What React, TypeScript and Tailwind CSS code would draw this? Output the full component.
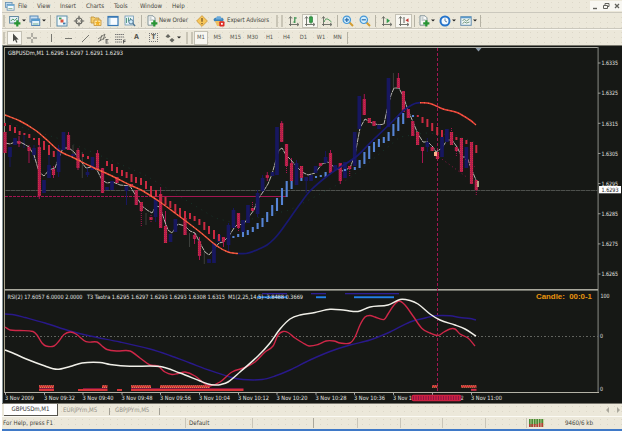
import React from "react";

const FONT = "font-['DejaVu_Sans_Condensed','DejaVu_Sans','Noto_Sans',sans-serif]";

type Bar = [number, number, number];

const redBodies: Bar[] = [
  [5, 132, 153], [19, 141, 144], [29, 147, 151], [39.3, 147, 196], [53.5, 169, 175], [68.5, 135, 150],
  [78, 150, 168], [97.5, 153, 170], [102.5, 168, 193], [117, 177, 183], [131.5, 184, 187], [136.3, 190, 205],
  [141.3, 202, 211], [151, 217, 220], [160.6, 194, 228], [165.5, 226, 243], [185, 218, 235], [194.5, 235, 239],
  [199.5, 241, 256], [223.5, 237, 242], [238.5, 213, 228], [252.5, 208, 211], [267.3, 175, 178], [281.7, 123, 142],
  [286.5, 144, 166], [291.5, 163, 181], [301.5, 166, 178], [320.5, 163, 166], [330.5, 153, 173], [340.3, 163, 181],
  [349.7, 166, 169], [364.3, 99, 115], [369.3, 118, 123], [374, 121, 126], [398.4, 78, 88], [403.4, 91, 112],
  [408.3, 109, 118], [412.7, 121, 136], [417.6, 132, 145], [422.5, 147, 151], [432.2, 147, 151], [437.4, 152, 159],
  [451.5, 132, 145], [456.4, 147, 151], [461.4, 138, 172], [471.5, 142, 184], [476.3, 180, 190],
];
const redWicks: Bar[] = [
  [19, 136, 147], [29, 145, 163], [39.3, 140, 199], [53.5, 166, 178], [68.5, 132, 136], [78, 148, 170],
  [97.5, 150, 153], [165.5, 211, 226], [194.5, 233, 244], [199.5, 237, 260], [223.5, 242, 247],
  [160.6, 187, 194], [267.3, 172, 181], [281.7, 121, 125], [291.5, 158, 163], [330.5, 150, 154], [340.3, 181, 184],
  [364.3, 94, 100], [398.4, 73, 78], [422.5, 151, 163],
];
const redDots: Bar[] = [
  [141.3, 211, 227], [238.5, 228, 232], [252.5, 202, 208], [286.5, 166, 174], [349.7, 169, 177], [451.5, 128, 132],
  [151, 215, 223], [456.4, 151, 156], [476.3, 190, 196],
];
const blueBodies: Bar[] = [
  [10, 147, 157], [15, 138, 145], [34, 148, 155], [44, 180, 193], [49, 165, 178], [58.6, 148, 172], [63.5, 132, 150],
  [73, 154, 156], [87.5, 172, 175], [92.5, 157, 170], [107, 187, 190], [112, 181, 190], [126.5, 186, 191],
  [155.6, 199, 217], [170.5, 234, 242], [175.4, 219, 232], [209, 259, 263], [214, 243, 263], [219, 235, 242],
  [228.5, 225, 245], [233.5, 210, 228], [243, 220, 232], [248, 205, 223], [257.6, 193, 214], [262.6, 178, 191],
  [272.5, 172, 176], [277, 127, 175], [296.5, 163, 185], [306.2, 177, 181], [311, 175, 181], [315.6, 166, 173],
  [325.6, 157, 163], [335.3, 165, 170], [345, 162, 178], [354.7, 132, 166], [359.3, 96, 129], [379, 125, 129],
  [388.5, 78, 127], [427.3, 142, 147], [442, 137, 157], [446.9, 129, 142], [466.4, 147, 168],
];
const blueWicks: Bar[] = [
  [10, 157, 167], [24, 133, 148], [34, 145, 160], [49, 153, 165], [58.6, 145, 177], [87.5, 168, 177], [126.5, 185, 205],
  [155.6, 217, 222], [228.5, 223, 252], [233.5, 208, 210], [257.6, 190, 217], [262.6, 175, 193], [296.5, 160, 166],
  [306.2, 180, 193], [325.6, 151, 157], [427.3, 138, 152],
];
const greyWicks: Bar[] = [
  [73, 145, 154], [82.3, 152, 178], [146, 213, 225], [189.5, 233, 247], [204.3, 252, 264], [393.4, 73, 88],
];
const redTrend: Bar[] = [
  [5, 123, 126], [10, 125, 131], [15, 127, 133], [19.6, 131, 135], [24.4, 133, 135], [29.3, 134, 138], [34, 138, 140],
  [39, 138, 145], [44, 141, 150], [49, 145, 155], [53.8, 151, 157], [83, 154, 157], [88, 156, 159], [107, 161, 166],
  [112, 164, 171], [117, 167, 173], [122, 170, 176], [126.6, 172, 178], [131.5, 174, 182], [136, 177, 183],
  [141, 178, 185], [146, 181, 189], [151, 186, 196], [156, 190, 197], [160.6, 194, 203], [165.5, 197, 205],
  [170.3, 201, 208], [175.3, 204, 213], [180, 208, 217], [185, 211, 218], [190, 213, 219], [194.6, 216, 221],
  [199.4, 219, 225], [204.3, 222, 230], [209, 226, 234], [214, 230, 239], [219, 234, 241], [417.8, 115, 117],
  [422.5, 117, 123], [427.4, 119, 127], [432.2, 123, 131], [437.2, 127, 135], [442, 130, 137], [456.4, 137, 140],
  [466.4, 140, 144], [476.3, 145, 153],
];
const blueTrend: Bar[] = [
  [233.4, 236, 238], [238.2, 234, 237], [243, 232, 237], [247.8, 230, 235], [252.8, 227, 232], [257.6, 223, 229],
  [262.5, 218, 227], [267.2, 212, 222], [272.2, 205, 216], [277, 198, 211], [282, 188, 205], [286.7, 181, 197],
  [291.6, 181, 189], [301.4, 178, 181], [316, 176, 178], [320.8, 175, 177], [325.6, 172, 177], [345, 169, 171],
  [354.8, 167, 170], [359.6, 160, 168], [364.4, 152, 164], [369.2, 146, 159], [374, 142, 152], [378.9, 139, 147],
  [383.8, 137, 143], [388.6, 132, 141], [393.4, 124, 136], [398.3, 117, 131], [403.2, 113, 124], [413, 115, 117],
];

const bars = (list: Bar[], w: number, fill: string) =>
  list.map(([x, a, b], i) => <rect key={i} x={x - w / 2} y={a} width={w} height={b - a} fill={fill} />);
const dots = (list: Bar[], stroke: string) =>
  list.map(([x, a, b], i) => (
    <line key={i} x1={x} x2={x} y1={a} y2={b} stroke={stroke} strokeWidth={1} strokeDasharray="1 1" />
  ));

/* Monotone-ish curve through the given points. */
function curve(points: string) {
  const p = points.split(" ").map((s) => s.split(",").map(Number));
  let d = `M${p[0][0]} ${p[0][1]}`;
  for (let i = 0; i < p.length - 1; i++) {
    const a = p[Math.max(0, i - 1)], b = p[i], c = p[i + 1], e = p[Math.min(p.length - 1, i + 2)];
    const dx = (c[0] - b[0]) / 3;
    const m1 = c[0] === a[0] ? 0 : (c[1] - a[1]) / (c[0] - a[0]);
    const m2 = e[0] === b[0] ? 0 : (e[1] - b[1]) / (e[0] - b[0]);
    d += `C${b[0] + dx} ${b[1] + m1 * dx} ${c[0] - dx} ${c[1] - m2 * dx} ${c[0]} ${c[1]}`;
  }
  return d;
}

const quoteLine =
  "5,143 10,144 15,142 20,142 24,144 29,147 34,155 39,172 44,176 49,170 55,168 58,160 63,148 69,148 74,152 80,160 86,168 92,167 97,170 102,180 107,183 113,182 120,185 130,186 136,196 142,206 147,210 152,213 156,206 160,207 165,222 168,230 172,233 178,224 185,226 190,231 195,233 200,243 205,252 209,255 214,249 219,243 223,242 229,236 234,228 238,224 243,225 248,218 254,210 258,199 263,192 268,184 272,174 276,160 279,150 282,148 286,155 291,160 296,166 302,172 308,175 315,173 322,164 328,162 334,167 342,171 350,168 355,155 360,128 365,119 372,123 379,125 384,124 387,110 391,95 394,88 399,88 403,96 408,110 413,122 418,134 423,142 428,142 433,147 436,152 442,148 447,140 452,140 457,147 462,157 467,157 471,168 476,180";
const maDown =
  "5,115 20,121 35,130 47,140 58,150 65,154 72,157 90,166 110,175 130,185 143,191 160,202 175,213 200,232 217,246 228,252 238,253.5";
const maUp =
  "238,253.5 246,253.5 253,251.5 260,248.5 267,245 274,239 280,232 300,204 310,191 330,174 357,156 373,140 393,121 403,111 410,106 415,103.5 420,102.7";
const maEnd = "420,102.7 430,103.5 443,109 457,112.5 470,120 476,125";
const slowLine =
  "5,314 15,315 25,317.5 45,323 70,331 90,336 120,342 150,349 170,355.5 190,363 210,370.5 230,377 243,379.5 262,379.5 275,376 290,370 310,360 330,351.5 350,345 370,340 390,332 410,322 425,318 435,315.8 450,315.8 460,317.5 470,318.5 476,320";
const fastLine =
  "5,327 10,330 20,330.5 33,331.5 37,335 42,343 46,346 54,346 59,341 64,334.5 70,332 76,334 86,341.7 97,342 102,346 107,349.5 117,351 130,351 140,358 150,365 158,366 165,372 172,374.5 178,373.5 185,372 195,376 205,384 210,386 220,382 232,372 245,367.5 255,362 265,352 273,346 278,335 283,331.5 288,332.5 295,338 303,343 309,346 318,344.5 326,341 334,341 340,343 350,343 355,337 360,325 365,317 370,315.5 375,317 384,319.5 388,314 394,305 399,301 405,305 413,316 422,328.5 430,333 438,335.5 444,332 450,329 455,329 460,334 468,338 475,346";
const signalLine =
  "5,350 15,354 25,358.5 45,366 57,369.3 70,366.5 82,363 100,362.5 110,364.5 130,366.3 160,366.5 180,373 200,381 208,384 215,385 221,384.5 228,382 240,372 258,356 270,343 280,329 290,319 300,315 315,312.5 330,309.3 345,310.3 358,311.5 370,307 388,305 400,299.5 410,300.5 418,304 430,314 440,320 455,325 465,329 476,336";

const strip = (list: [number, number][], y: number, h: number, fill: string) =>
  list.map(([a, b], i) => <rect key={i} x={a} y={y} width={b - a} height={h} fill={fill} />);

const prices = ["1.6335", "1.6325", "1.6315", "1.6305", "1.6295", "1.6285", "1.6275", "1.6265"];
const times: [number, string, number][] = [
  [5, "3 Nov 2009", 29], [44, "3 Nov 09:32", 31], [82.5, "3 Nov 09:40", 31], [121.5, "3 Nov 09:48", 31],
  [160, "3 Nov 09:56", 31], [199, "3 Nov 10:04", 31], [238, "3 Nov 10:12", 31], [276.5, "3 Nov 10:20", 31],
  [315.5, "3 Nov 10:28", 31], [354, "3 Nov 10:36", 31], [393, "3 Nov 1", 19], [471, "3 Nov 11:00", 31],
];

function T({ x, y, w, children, fill = "#e4e4e0", size = 5.9 }: {
  x: number; y: number; w: number; children: string; fill?: string; size?: number;
}) {
  return (
    <text x={x} y={y} textLength={w} lengthAdjust="spacingAndGlyphs" fill={fill} fontSize={size}>
      {children}
    </text>
  );
}

function Chart() {
  return (
    <svg className="block h-[358px] w-[620px] shrink-0" viewBox="2 45 620 358">
      <defs>
        <pattern id="redHatch" width="2" height="2" patternUnits="userSpaceOnUse">
          <rect width="2" height="2" fill="#ae1753" />
          <rect width="1" height="1" fill="#d0343f" />
          <rect x="1" y="1" width="1" height="1" fill="#bd2048" />
        </pattern>
        <pattern id="orangeHatch" width="2" height="3" patternUnits="userSpaceOnUse">
          <rect width="2" height="3" fill="#dc3939" />
          <rect width="1" height="1" fill="#ffae69" />
          <rect x="1" y="1" width="1" height="1" fill="#ff8360" />
        </pattern>
      </defs>
      <rect x="2" y="45" width="620" height="358" fill="#161815" />
      <rect x="2" y="45" width="620" height="1" fill="#77766c" />
      <rect x="2" y="45" width="1" height="358" fill="#8c9a9c" />
      <rect x="4" y="47" width="594" height="1" fill="#a9aaa2" />
      <rect x="4" y="47" width="1" height="345" fill="#a9a48c" />
      <rect x="597.5" y="47" width="1.2" height="346" fill="#777873" />
      <rect x="4" y="289" width="594" height="1.6" fill="#aaa99e" />
      <rect x="4" y="392" width="595" height="1" fill="#b4b2a6" />
      <path d="M475.5 48h6l-3 3.4z" fill="#8a98a6" />

      <path d="M5 122 L60 139 L85 149 L145 175 L215 218 L235 223 L290 210 L350 178 L400 137 L425 133 L455 135 L475 142" fill="none" stroke="#18352b" strokeWidth="1" strokeDasharray="1 5" />
      <line x1="5" x2="598" y1="190.5" y2="190.5" stroke="#4d504c" strokeWidth="1" />
      <line x1="5" x2="598" y1="190.5" y2="190.5" stroke="#30332f" strokeWidth="1" strokeDasharray="1 4" />
      <line x1="5" x2="161" y1="196.5" y2="196.5" stroke="#a31552" strokeWidth="1" strokeDasharray="3 1" />
      <line x1="161" x2="287" y1="196.5" y2="196.5" stroke="#a31552" strokeWidth="1" />
      <line x1="437.5" x2="437.5" y1="48" y2="392" stroke="#a31552" strokeWidth="1" strokeDasharray="3 2" />

      {bars(greyWicks, 1, "#3c3f3b")}
      {bars(blueWicks, 1, "#17175f")}
      {bars(redWicks, 1, "#a81550")}
      {dots(redDots, "#a81550")}
      <polyline points={quoteLine} fill="none" stroke="#b8b6b0" strokeWidth="1" strokeDasharray="5 0.6" />
      {bars(blueBodies, 3.7, "#17175f")}
      {bars(redBodies, 3.2, "url(#redHatch)")}
      {bars(redTrend, 2, "#c92a41")}
      {bars(blueTrend, 2.1, "#5684d5")}
      <path d={curve(maDown)} fill="none" stroke="#ee4c37" strokeWidth="1.5" />
      <path d={curve(maDown)} fill="none" stroke="#ffad77" strokeWidth="0.7" strokeDasharray="1 3" />
      <path d={curve(maUp)} fill="none" stroke="#191971" strokeWidth="1.7" />
      <path d={curve(maEnd)} fill="none" stroke="#ee4238" strokeWidth="1.5" />
      <path d={curve(maEnd)} fill="none" stroke="#ffac75" strokeWidth="0.6" strokeDasharray="1 3" />
      <path d="M439 157l29 21M465 159l10 8" stroke="#a81550" strokeWidth="0.8" strokeDasharray="1 3" />
      <rect x="434" y="152" width="3" height="4" fill="#ffb28b" />
      <rect x="477.3" y="181" width="1.5" height="6" fill="#d5cb9f" />

      <T x={8} y={55} w={115}>GBPUSDm,M1  1.6296 1.6297 1.6291 1.6293</T>
      {prices.map((p, i) => (
        <g key={p}>
          <rect x="598" y={62.5 + i * 30.15} width="2.5" height="1" fill="#9a9b95" />
          <T x={601.5} y={65.3 + i * 30.15} w={16.5}>{p}</T>
        </g>
      ))}
      <rect x="599" y="186" width="22" height="7.3" fill="#fff" />
      <T x={601.5} y={192} w={17} fill="#222">1.6293</T>

      <line x1="5" x2="600" y1="336.5" y2="336.5" stroke="#6b6d68" strokeWidth="0.9" strokeDasharray="2 2 1 2" />
      {strip([[262, 287], [311, 326], [345, 399]], 293, 1.3, "#2f1f94")}
      {strip([[257, 287], [316, 326], [354, 394]], 296.3, 1.9, "#2480ea")}
      {strip([[39, 54], [102, 107.5], [131, 151], [160, 210]], 385.3, 2.5, "url(#orangeHatch)")}
      {strip([[39, 54], [78, 107.5], [117, 122], [131, 243.5]], 389, 2, "#d83337")}
      {strip([[39, 54], [83, 107.5], [131, 243.5]], 388, 1, "#7d1740")}
      {strip([[432, 437.5], [461, 476.5]], 385.3, 2.3, "url(#orangeHatch)")}
      {strip([[471, 476.5]], 388.8, 2, "#cf2a48")}
      <path d={curve(slowLine)} fill="none" stroke="#29198a" strokeWidth="1.4" />
      <path d={curve(fastLine)} fill="none" stroke="#cf2748" strokeWidth="1.4" />
      <path d={curve(signalLine)} fill="none" stroke="#f0efe8" strokeWidth="1.5" />
      <T x={7.5} y={299} w={75}>RSI(2) 17.6057 6.0000 2.0000</T>
      <T x={87} y={299} w={138}>T3 Taotra 1.6295 1.6297 1.6293 1.6293 1.6308 1.6315</T>
      <T x={228} y={299} w={75}>M1(2,25,14,5) -3.8488 0.3669</T>
      <text x="536" y="299.3" textLength="56" lengthAdjust="spacingAndGlyphs" fill="#e8940e" fontSize="7.5" fontWeight="700" xmlSpace="preserve" fontFamily="Liberation Sans, sans-serif">Candle:  00:0-1</text>
      <T x={600.5} y={297.7} w={9}>100</T>
      <T x={600} y={338.4} w={3}>0</T>
      <T x={600} y={391} w={3}>0</T>

      {times.map(([x, t, w]) => (
        <g key={x}>
          <rect x={x} y="392.5" width="1" height="2.3" fill="#aaa" />
          <T x={x} y={400.4} w={w}>{t}</T>
        </g>
      ))}
      <rect x="432" y="392.5" width="1" height="2.3" fill="#aaa" />
      <rect x="411.5" y="394.7" width="50" height="6.6" rx="2" fill="#cb2141" />
      <path d="M413 398h48" stroke="#8e1545" strokeWidth="4" strokeDasharray="1 1.5" />
      <T x={461} y={400.4} w={2.5}>2</T>
    </svg>
  );
}

/* ---- toolbar glyphs ---- */
const Ico = ({ children }: { children: React.ReactNode }) => (
  <svg className="h-[12px] w-[12px] shrink-0" viewBox="0 0 12 12" fill="none">{children}</svg>
);
const Drop = () => (
  <svg className="ml-px h-[3px] w-[4px] shrink-0" viewBox="0 0 4 3"><path d="M0 .4h4L2 2.6z" fill="#222" /></svg>
);
const Plus = () => <path d="M8.3 5.3v6.2M5.2 8.4h6.2" stroke="#279433" strokeWidth="2.2" />;
const NewChart = () => <Ico><rect x=".6" y="1.5" width="8.8" height="6.6" fill="#e5f0f6" stroke="#648aa2" /><path d="M1.8 6l2-2 2 1.5 2.2-2.5" stroke="#4c9b66" /><Plus /></Ico>;
const Profiles = () => <Ico><rect x="1" y="1" width="8" height="6" fill="#c7dff2" stroke="#5788b7" /><rect x="2.7" y="4" width="8" height="6.5" fill="#e5f3fb" stroke="#5788b7" /><path d="M2.7 5h8" stroke="#579bcf" strokeWidth="2" /><path d="M4 9h5.5" stroke="#71ad91" /></Ico>;
const Market = () => <Ico><rect x="1" y="1" width="10" height="10" fill="#f1f8fa" stroke="#5b8ba9" /><path d="M3 3.5h2.5" stroke="#3b9b56" strokeWidth="1.8" /><path d="M4.5 4.5h3v3h-3z" fill="#d9533f" /><path d="M7 8.5h2.5" stroke="#3b7bb0" strokeWidth="1.8" /></Ico>;
const Target = () => <Ico><circle cx="6" cy="6" r="3" stroke="#656560" strokeWidth="1.1" /><path d="M6 .8v4M6 7.2v4M.8 6h4M7.2 6h4" stroke="#656560" strokeWidth="1.2" /></Ico>;
const Folder = () => <Ico><path d="M1 2h3l1 1h4v5H1z" fill="#f6cf6f" stroke="#bd8d31" strokeWidth=".8" /><path d="M4 5h7v5.5H4z" fill="#ffe49a" stroke="#c69132" strokeWidth=".8" /><path d="M7.7 5.1l.8 1.8 2 .2-1.5 1.3.4 2-1.7-1-1.7 1 .4-2L5 7.1l2-.2z" fill="#f1ae22" /></Ico>;
const Terminal = () => <Ico><rect x="1" y="1.5" width="10" height="9" fill="#f8fbff" stroke="#3878b5" strokeWidth="1.2" /><path d="M1 2h10" stroke="#3878b5" strokeWidth="1.5" /><path d="M2.8 3v7" stroke="#afd3e8" strokeWidth="1.5" /></Ico>;
const Tester = () => <Ico><rect x="1" y="1" width="8.5" height="9" fill="#e7f2f8" stroke="#729ab4" strokeWidth=".8" /><path d="M2.5 3v5M4.5 2.5v4M6.5 3v4" stroke="#58a082" /><circle cx="7" cy="6.8" r="2.2" fill="#d1ecfa" stroke="#527a99" /><path d="M8.8 8.6l2.3 2.3" stroke="#4d7592" strokeWidth="1.4" /></Ico>;
const Order = () => <Ico><path d="M2 .8h5l2 2v7.4H2z" fill="#f8f9f7" stroke="#778b91" strokeWidth=".9" /><path d="M3.5 3h2M3.5 5h4" stroke="#9aa9aa" /><Plus /></Ico>;
const Diamond = () => <Ico><path d="M6 .6L11.4 6 6 11.4.6 6z" fill="#f7c75a" stroke="#c99338" strokeWidth=".8" /><path d="M6 3v3.8M6 8v1.2" stroke="#7b5724" strokeWidth="1.3" /></Ico>;
const Expert = () => <Ico><ellipse cx="5.6" cy="4.8" rx="5" ry="2.3" fill="#3b83b9" /><path d="M2.5 4.5L4 1.3h3.5L9 4.5" fill="#6baada" /><path d="M2 6h7l-2 5H4z" fill="#edbf62" /><rect x="6.3" y="6.2" width="5.2" height="5.2" rx="1" fill="#dc2c27" /><rect x="8" y="7.9" width="1.8" height="1.8" fill="#fff" /></Ico>;
const Axis = () => <path d="M2.5 2v9M1 9.5h9.5M1 3.5l1.5-2L4 3.5M9 8l2 1.5L9 11" stroke="#676962" strokeWidth=".9" />;
const BarsIcon = () => <Ico><Axis /><path d="M6.8 2v6M5.3 7h1.5M6.8 3h2" stroke="#34904a" strokeWidth="1.2" /></Ico>;
const CandleIcon = () => <Ico><Axis /><path d="M7 .7v8" stroke="#287c38" /><rect x="5.6" y="2" width="2.8" height="5.2" fill="#37a34c" stroke="#287c38" strokeWidth=".7" /></Ico>;
const LineIcon = () => <Ico><Axis /><path d="M3 7c2-5 4-3 7.5 0" stroke="#469954" /></Ico>;
const Zoom = ({ plus = false }: { plus?: boolean }) => <Ico><path d="M7.5 7.5L11 11" stroke="#d39c32" strokeWidth="2" /><circle cx="4.8" cy="4.8" r="3.7" fill="#d0edfc" stroke="#4798d7" strokeWidth="1.2" /><path d={plus ? "M2.7 4.8h4.2M4.8 2.7v4.2" : "M2.7 4.8h4.2"} stroke="#286bab" strokeWidth="1.2" /></Ico>;
const Scroll = () => <Ico><Axis /><path d="M5.7 3.2v5L9 5.7z" fill="#329a4c" /></Ico>;
const Shift = () => <Ico><Axis /><path d="M6 2v6" stroke="#5f625d" /><path d="M10.5 3.3v4L7.5 5.3z" fill="#c6332e" /></Ico>;
const Clock = () => <Ico><circle cx="6" cy="6" r="4.5" fill="#f4faff" stroke="#2574cb" strokeWidth="2" /><path d="M6 3.5V6l2 1" stroke="#607b94" strokeWidth=".9" /></Ico>;
const Template = () => <Ico><rect x=".8" y="1.7" width="10.4" height="8.6" fill="#eef5f5" stroke="#628cad" /><path d="M1 2.5h10" stroke="#5b9acb" strokeWidth="1.6" /><path d="M2.5 5.5l2-1 2 1.5 3-2M2.5 8.5l2-1.5 2 1 3-1" stroke="#55815f" strokeWidth=".8" /></Ico>;

const Cell = ({ className, children }: { className: string; children?: React.ReactNode }) => (
  <div className={`flex h-[14px] shrink-0 items-center justify-center ${className}`}>{children}</div>
);
const Sep = ({ className }: { className: string }) => (
  <div className={`flex shrink-0 justify-center ${className}`}><div className="h-[12px] w-px bg-[#b5b2a4]" /></div>
);
const Grip = () => <div className="h-[12px] w-[2px] shrink-0 border-x border-[#c9c5b6] bg-white" />;
const pressed = "border border-[#c4c1b4] bg-[#f8f7f1]";

const frames: [string, string][] = [
  ["M5", "w-[19px]"], ["M15", "w-[17px]"], ["M30", "w-[17px]"], ["H1", "w-[17px]"], ["H4", "w-[17px]"],
  ["D1", "w-[17px]"], ["W1", "w-[18px]"], ["MN", "w-[15px]"],
];

export default function App() {
  return (
    <div className={`flex h-[431px] w-[625px] flex-col overflow-hidden bg-white pl-[2px] pr-[3px] text-[6.2px] leading-none whitespace-pre text-[#454540] ${FONT}`}>
      <div className="flex h-[45px] shrink-0 flex-col bg-[#ece8da] bg-[radial-gradient(#ddd8c9_0.5px,transparent_0.6px)] bg-[size:7px_5px]">
        <div className="flex h-[12px] shrink-0 items-center pl-[3px]">
          <div className="w-[13px]">
            <svg className="h-[9px] w-[10px]" viewBox="0 0 12 11" fill="none"><rect x=".5" y=".5" width="8" height="6" fill="#bedcf0" stroke="#668fb1" /><rect x="2.5" y="3" width="8.5" height="7" fill="#f5fafc" stroke="#668fb1" /><path d="M2.5 4h8.5" stroke="#6daed9" strokeWidth="1.6" /><path d="M4 8h5" stroke="#7cab87" /></svg>
          </div>
          <span className="w-[19px]">File</span>
          <span className="w-[23px]">View</span>
          <span className="w-[26px]">Insert</span>
          <span className="w-[28px]">Charts</span>
          <span className="w-[26px]">Tools</span>
          <span className="w-[32px]">Window</span>
          <span>Help</span>
          <div className="ml-auto flex h-[10px] bg-[#f8f7f2]">
            <svg className="h-[10px] w-[32px]" viewBox="0 0 32 10" fill="none" stroke="#62625c"><path d="M3 7.5h4" strokeWidth="1.4" /><path d="M13.500 4.500h4v3h-4zM15 4V2.500h4v3h-1.500" /><path d="M25 3l4 4M29 3l-4 4" strokeWidth="1.3" /></svg>
          </div>
        </div>
        <div className="flex h-[17px] shrink-0 items-center border-y border-t-[#cbc8bd] border-b-[#cbc8bd] pl-px">
          <div className="flex w-[4px]"><Grip /></div>
          <Cell className="w-[20px]"><NewChart /><Drop /></Cell>
          <Cell className="w-[20px]"><Profiles /><Drop /></Cell>
          <Sep className="w-[6px]" />
          <Cell className="w-[17px]"><Market /></Cell>
          <Cell className="w-[17px]"><Target /></Cell>
          <Cell className="w-[17px]"><Folder /></Cell>
          <Cell className="w-[17px]"><Terminal /></Cell>
          <Cell className="w-[17px]"><Tester /></Cell>
          <Sep className="w-[6px]" />
          <Cell className="w-[15px]"><Order /></Cell>
          <span className="w-[34px] tracking-[-0.1px]">New Order</span>
          <Cell className="w-[18px]"><Diamond /></Cell>
          <Cell className="w-[16px]"><Expert /></Cell>
          <span className="w-[49px] tracking-[-0.1px]">Expert Advisors</span>
          <div className="flex w-[9px] justify-between pr-[2px]"><Grip /><Grip /></div>
          <Cell className="w-[17px]"><BarsIcon /></Cell>
          <Cell className={`w-[16px] ${pressed}`}><CandleIcon /></Cell>
          <Cell className="w-[17px]"><LineIcon /></Cell>
          <Sep className="w-[4px]" />
          <Cell className="w-[17px]"><Zoom plus /></Cell>
          <Cell className="w-[17px]"><Zoom /></Cell>
          <Sep className="w-[5px]" />
          <Cell className="w-[17px]"><Scroll /></Cell>
          <Cell className={`w-[17px] ${pressed}`}><Shift /></Cell>
          <Sep className="w-[4px]" />
          <Cell className="w-[21px]"><Order /><Drop /></Cell>
          <Cell className="w-[21px]"><Clock /><Drop /></Cell>
          <Cell className="w-[21px]"><Template /><Drop /></Cell>
          <Sep className="w-[2px]" />
        </div>
        <div className="flex h-[16px] shrink-0 items-center border-t border-[#f8f6ee] pl-px text-[#55554f]">
          <div className="flex w-[4px]"><Grip /></div>
          <Cell className={`w-[15px] ${pressed}`}><Ico><path d="M4 1.5v8l2-1.7 1.3 3 1.2-.6-1.3-2.7h2.5z" fill="#494a46" /></Ico></Cell>
          <Cell className="w-[19px]"><Ico><path d="M6 1v4M6 7v4M1 6h4M7 6h4" stroke="#777770" /></Ico></Cell>
          <Cell className="w-[19px]"><Ico><path d="M6.5 2v8" stroke="#777770" /></Ico></Cell>
          <Cell className="w-[17px]"><Ico><path d="M2 6.5h7" stroke="#777770" /></Ico></Cell>
          <Cell className="w-[17px]"><Ico><path d="M2 10l7-7" stroke="#777770" /></Ico></Cell>
          <Cell className="w-[17px]"><Ico><path d="M1 7l7-5M1 10l8-5M3 9l2-6M6 8l2-6" stroke="#6e6e68" strokeWidth=".9" /><path d="M9 7.5h2.5M9 9h2M9 11h2.5M9 7v4.5" stroke="#444" strokeWidth=".7" /></Ico></Cell>
          <Cell className="w-[17px]"><Ico><path d="M1 2.5h9M1 5h9M1 7.5h7M1 10h7" stroke="#777" strokeDasharray="1.5 .5" /><path d="M9.5 11.5v-3.5h2M9.5 9.500h2" stroke="#444" strokeWidth=".8" /></Ico></Cell>
          <Cell className="w-[17px] text-[7px] font-bold">A</Cell>
          <Cell className="w-[17px]"><div className="flex h-[9px] w-[9px] items-center justify-center border border-dotted border-[#777] text-[6.5px] font-bold">T</div></Cell>
          <Cell className="w-[21px]"><Ico><path d="M1.5 4.5L4 2l2.5 2.5L4 6zM5.5 8l2.5-2 2.5 2L8 10.5zM6 4l2 2" fill="#666761" /></Ico><Drop /></Cell>
          <div className="flex w-[11px] justify-between pl-[3px] pr-px"><Grip /><Grip /></div>
          <Cell className={`w-[14px] text-[5.8px] ${pressed}`}>M1</Cell>
          <div className="flex text-[5.8px]">
            {frames.map(([name, width]) => <Cell key={name} className={width}>{name}</Cell>)}
          </div>
          <Sep className="w-[4px]" />
        </div>
      </div>

      <Chart />

      <div className="flex h-[13px] shrink-0 items-start border-t border-[#77756d] bg-[#ece8da] bg-[radial-gradient(#ddd8c9_0.5px,transparent_0.6px)] bg-[size:7px_5px] pl-[2px] text-[6.1px] tracking-[-0.05px] text-[#96938a]">
        <div className="flex h-[12px] w-[54px] items-center justify-center border-r border-b border-[#56554f] bg-white text-[#333]">GBPUSDm,M1</div>
        <span className="ml-[5px] flex h-[12px] w-[45px] items-center">EURJPYm,M5</span>
        <Cell className="w-[2px]"><div className="h-[7px] w-px bg-[#a5a297]" /></Cell>
        <span className="ml-[5px] flex h-[12px] w-[43px] items-center">GBPJPYm,M5</span>
        <Cell className="w-[3px]"><div className="h-[7px] w-px bg-[#a5a297]" /></Cell>
        <svg className="mt-[3px] mr-px ml-auto h-[6px] w-[16px]" viewBox="0 0 16 6"><path d="M4 0v6L1 3zM12 0v6l3-3z" fill="#aaa79c" /></svg>
      </div>
      <div className="flex h-[13px] shrink-0 items-center border-t border-[#fbfaf4] bg-[#ece8da] bg-[radial-gradient(#ddd8c9_0.5px,transparent_0.6px)] bg-[size:7px_5px] pl-px">
        <span className="w-[182px]">For Help, press F1</span>
        <div className="flex h-[10px] w-[67px] items-center border-l border-[#c9c5b8] pl-[3px]">Default</div>
        <div className="h-[10px] w-[61px] border-l border-[#c9c5b8]" />
        <div className="h-[10px] w-[44px] border-l border-[#aaa79b]" />
        <div className="h-[10px] w-[43px] border-l border-[#c9c5b8]" />
        <div className="h-[10px] w-[42px] border-l border-[#c9c5b8]" />
        <div className="h-[10px] w-[43px] border-l border-[#c9c5b8]" />
        <div className="flex h-[10px] w-[41px] items-center border-l border-[#c9c5b8]" />
        <div className="flex h-[10px] w-[67px] items-center border-l border-[#c9c5b8] pl-[2px]">
          <svg className="h-[8px] w-[15px]" viewBox="0 0 15 8"><rect width="15" height="8" fill="#cad4a5" /><path d="M.7 0v8M3.2 0v8M5.7 0v6M8.2 0v5M10.7 0v4M13.2 0v4" stroke="#478c35" strokeWidth="1.7" /><path d="M.7 5v3M3.2 5v3M5.7 5v3M8.2 5v3M10.7 4v4M13.2 4v4" stroke="#b63d38" strokeWidth="1.7" /></svg>
          <span className="ml-auto">9460/6 kb</span>
        </div>
      </div>
      <div className="h-[2px] shrink-0 bg-[#3f79c7]" />
    </div>
  );
}
